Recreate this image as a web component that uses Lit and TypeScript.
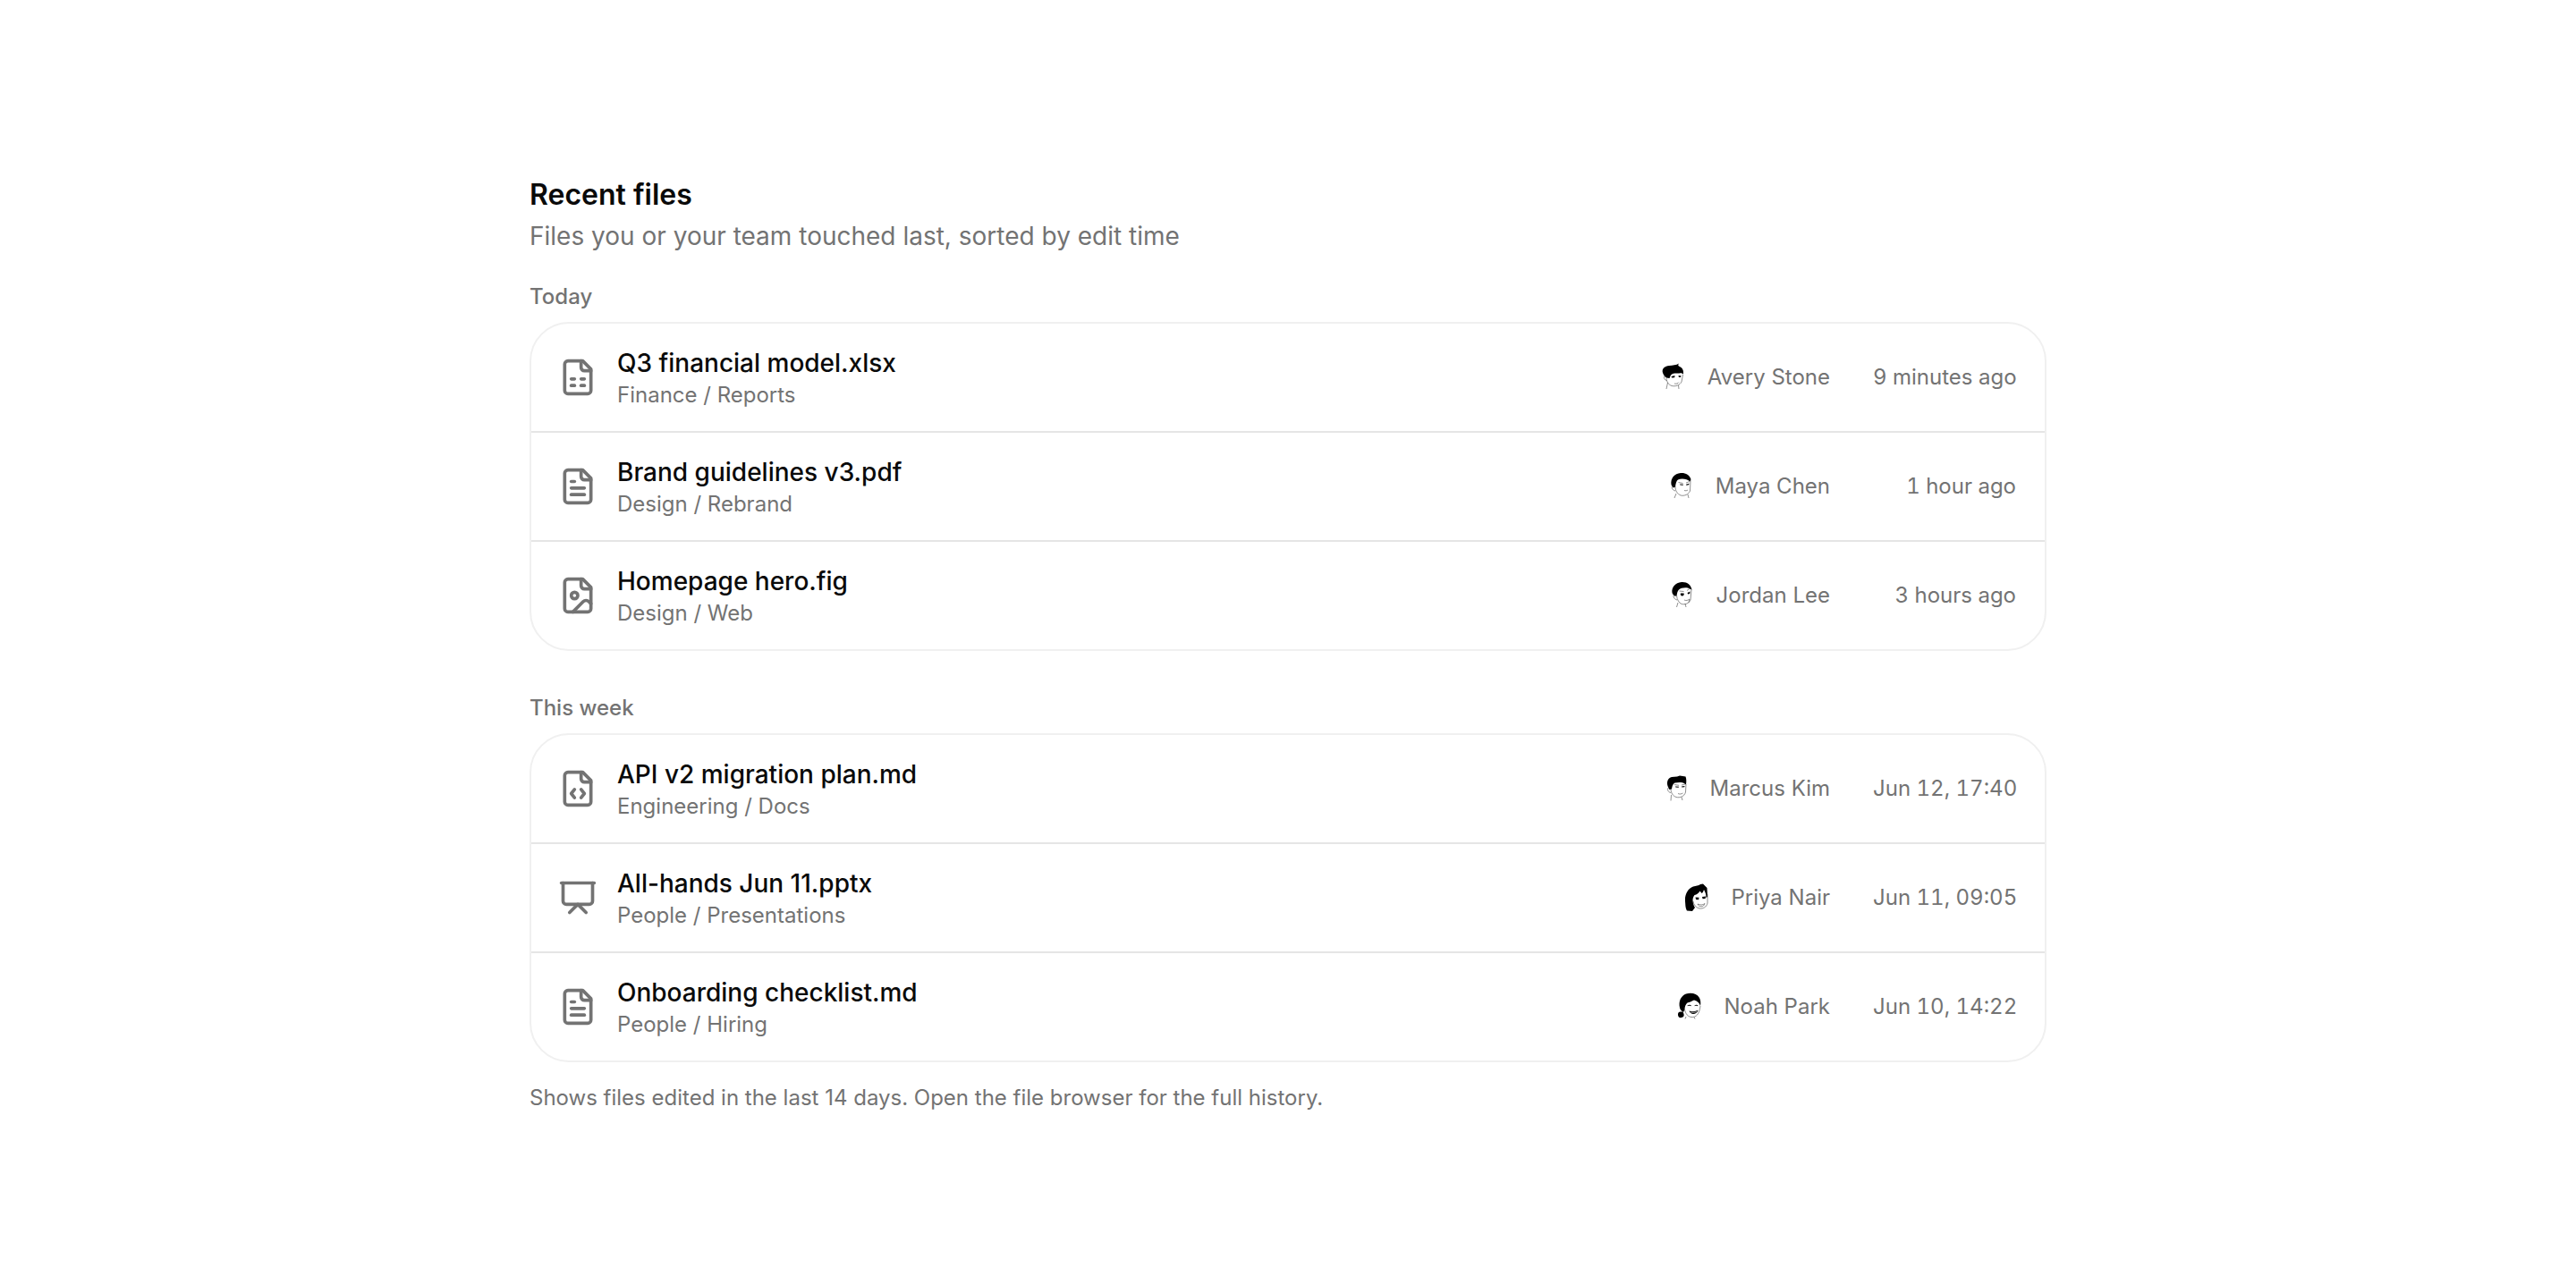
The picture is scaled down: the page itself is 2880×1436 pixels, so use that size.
import { LitElement, css, html, svg } from 'lit';
import { customElement } from 'lit/decorators.js';

type FileRow = {
  icon: keyof typeof ICONS,
  name: string,
  path: string,
  person: keyof typeof FACES,
  owner: string,
  time: string,
};

const FILE_BODY = svg`<path d="M15 2H6a2 2 0 0 0-2 2v16a2 2 0 0 0 2 2h12a2 2 0 0 0 2-2V7Z"/><path d="M14 2v4a2 2 0 0 0 2 2h4"/>`;

// lucide style, 24 grid
const ICONS = {
  sheet: svg`${FILE_BODY}<path d="M8 13h2"/><path d="M14 13h2"/><path d="M8 17h2"/><path d="M14 17h2"/>`,
  text: svg`${FILE_BODY}<path d="M10 9H8"/><path d="M16 13H8"/><path d="M16 17H8"/>`,
  image: svg`${FILE_BODY}<circle cx="10" cy="12" r="2"/><path d="m20 17-1.296-1.296a2.41 2.41 0 0 0-3.408 0L9 22"/>`,
  code: svg`${FILE_BODY}<path d="M10 12.5 8 15l2 2.5"/><path d="m14 12.5 2 2.5-2 2.5"/>`,
  slides: svg`<path d="M2 3h20"/><path d="M21 3v11a2 2 0 0 1-2 2H5a2 2 0 0 1-2-2V3"/><path d="m7 21 5-5 5 5"/>`,
};

// hand drawn faces: hair is the filled part, the rest is a thin outline
const FACES = {
  avery: svg`
    <path class="ink" d="M2 11C.5 6 4.500 3.500 9 3C13 2.500 17 2.500 20 .5C19 2 19 3 20 3.500C24 5 25.500 8 25 12.500L23.500 11.500C22.500 11 21.500 11 20.500 11.500C17 11.500 13 11 11 13.500L9.500 17L6 16.500C4 15.500 3 13.500 2 11Z"/>
    <path class="line" d="M6 17C6.500 21 8 24 12 25.500C16 26.500 21 25 23 21L24.500 13"/>
    <path class="line" d="M5 14C2.500 14.500 3 19 6.500 19.500M7.500 22L6 29M19.500 25L20 29"/>
    <path class="ink" d="M11.500 15l4-1-.3 2.300-3 .3ZM19.500 14l3 .2-.6 1.800-2-.3Z"/>
    <path class="line" d="M15 23C17 23.500 19 23 20 21.500"/>`,
  maya: svg`
    <path class="ink" d="M2.500 14C1.500 7 6 1.500 13 1C18 .5 23 3 24.500 8L23.500 10.500C20 7.500 14 6.500 10 8.500C8.500 9.500 7.500 12 7 16.500L5 17.500C4 16.500 3 15.500 2.500 14Z"/>
    <path class="line" d="M7 16C7 21 9 24 13 26C17 27 22 25 23.500 21L24 9"/>
    <path class="line" d="M5 15C2 16 3 20 7 21M8 24L6 29M21 25L22 29"/>
    <path class="ink" d="M12 13.500l4 .3-.4 1-3.100-.2ZM19 13.800l3.500-1-.4 1.500-2.700.4Z"/>
    <path class="line" d="M10.500 11.500l5 1M19 12l4-1.500M17 20.500c1.500.5 3 .3 4-.5"/>`,
  jordan: svg`
    <path class="ink" d="M2.500 13C1.500 7 6 1.500 13 1C19 .5 23.500 4 24.500 9.500L20 7.500C16 7 12 7.500 10 9.500C8.500 11 8 13 7.500 16.500L5 16.500C4 15.500 3 14.500 2.500 13Z"/>
    <path class="line" d="M7.500 16C8 21 10 24 13 25.500C17 26.500 21 25 23 21L24 9"/>
    <path class="line" d="M5 15C3 16 4 20 8 21M9 24L7.500 29M17 25L18 29"/>
    <path class="ink" d="M12 13.500a2 2 0 1 0 3.500 0ZM19.500 13l3-1.500-.3 2.500-2 .5Z"/>
    <path class="line" d="M10.500 11l5 .5M19 10.500l3.500-2.500M16 21c2 1 4 .5 6-1l-1 4"/>`,
  marcus: svg`
    <path class="ink" d="M4.500 13C3 8 5 4 9 3L15 2.500L18 1.500L24.500 2.500C25.500 5 25.500 8 25 11.500L23.500 10.500C21 8.500 16 9 12.500 9.500C10.500 10.500 9.500 13 9 16.500L6.500 17C5.500 15.500 5 14.500 4.500 13Z"/>
    <path class="line" d="M8 17C8.500 21 10 24 14 25.500C18 26.500 23 25 24.500 20L25 11"/>
    <path class="line" d="M6.500 14C3.500 15 4 20 8 20.500M8.500 23L8 29.500M20 25.500L21 29"/>
    <path class="ink" d="M13 13.500l4 .2-.3 1-3.300-.2ZM20 13.500l3.500-.5-.2 1.300-3 .2Z"/>
    <path class="line" d="M12 11.500l5 .8M20 12l4-1M16 21.500c1.500.8 4 .7 5.500-.5"/>`,
  priya: svg`
    <path class="ink" d="M1 20C.5 12 4 6 10 3.500C13 2.500 16 2.500 18 1L21 .5L25.500 5L26 15L24.500 16C24.500 12 23.500 9.500 22 7C21 10 20.500 10.500 19.500 11C18.500 9.500 18 9 17.500 8.500C16 11 14 12.500 11.500 13C10 15 9.500 17 9.500 19C10 23 10.500 25 12 27L9 31L3 30.500C1 27 1.500 24 1 20Z"/>
    <path class="line" d="M10 20C10.500 24 13 27 17 28C21 28.500 25 26.500 26 22L26 12"/>
    <path class="ink" d="M12.500 15.500l4 .3-.4 2.500-3 -.3ZM20 15l4-.5-.4 2.500-3 .3Z"/>
    <path class="line" d="M15 23c2.500 1.500 6 1.200 8-.5c-.5 2-2 3.300-4 3.300c-2 0-3.500-1-4-2.800Z"/>`,
  noah: svg`
    <path class="ink" d="M3 17C1.500 10 4 4 10 1.500C16 0 22 1 25 6C26.500 9 26.500 12 26 15C25 12 23 9.500 19 8.500C16 10 13.500 11 11.500 11.500C9.500 13 8.500 16 8.500 19L7 22L5 20.500C4 19.500 3.300 18.500 3 17Z"/>
    <path class="ink" d="M4 21.500a3.300 3.300 0 1 0 3.500 2.500L6.500 21.500Z"/>
    <path class="line" d="M8.500 19C9.500 24 12 27 16 27.500C21 28 25 24.500 26 15M10 27L9 29.500M19 27.500L20 29.500"/>
    <path class="ink" d="M11.500 14.500c1.500-1 3.500-1 4.500.2l-.8.500c-1.200-.5-2.200-.5-3.300 0ZM19.500 14.500c1.500-1 3-1 4 .2l-.7.500c-1-.5-2-.5-3 0Z"/>
    <path class="ink" d="M13.500 20.500c3 1 7 1 10-.7c-1 3-3 4.200-5.500 4.200c-2 0-3.700-1.300-4.500-3.500Z"/>
    <path class="teeth" d="M15 22c2 .6 5 .5 7-.5"/>`,
};

const TODAY: FileRow[] = [
  { icon: 'sheet', name: 'Q3 financial model.xlsx', path: 'Finance / Reports', person: 'avery', owner: 'Avery Stone', time: '9 minutes ago' },
  { icon: 'text', name: 'Brand guidelines v3.pdf', path: 'Design / Rebrand', person: 'maya', owner: 'Maya Chen', time: '1 hour ago' },
  { icon: 'image', name: 'Homepage hero.fig', path: 'Design / Web', person: 'jordan', owner: 'Jordan Lee', time: '3 hours ago' },
];

const THIS_WEEK: FileRow[] = [
  { icon: 'code', name: 'API v2 migration plan.md', path: 'Engineering / Docs', person: 'marcus', owner: 'Marcus Kim', time: 'Jun 12, 17:40' },
  { icon: 'slides', name: 'All-hands Jun 11.pptx', path: 'People / Presentations', person: 'priya', owner: 'Priya Nair', time: 'Jun 11, 09:05' },
  { icon: 'text', name: 'Onboarding checklist.md', path: 'People / Hiring', person: 'noah', owner: 'Noah Park', time: 'Jun 10, 14:22' },
];

@customElement('app-root')
export class AppRoot extends LitElement {
  private renderRow(row: FileRow) {
    return html`
      <li class="row">
        <svg class="icon" viewBox="0 0 24 24">${ICONS[row.icon]}</svg>
        <div class="info">
          <div class="name">${row.name}</div>
          <div class="path">${row.path}</div>
        </div>
        <div class="owner">
          <svg class="face" viewBox="0 0 30 30">${FACES[row.person]}</svg>
          <span>${row.owner}</span>
        </div>
        <div class="time">${row.time}</div>
      </li>
    `;
  }

  render() {
    return html`
      <main class="page">
        <h1>Recent files</h1>
        <p class="lead">Files you or your team touched last, sorted by edit time</p>
        <h2>Today</h2>
        <ul class="card">${TODAY.map(row => this.renderRow(row))}</ul>
        <h2 class="second">This week</h2>
        <ul class="card">${THIS_WEEK.map(row => this.renderRow(row))}</ul>
        <p class="foot">Shows files edited in the last 14 days. Open the file browser for the full history.</p>
      </main>
    `;
  }

  static styles = css`
    :host {
      display: block;
      min-height: 1436px;
      background: #fff;
      font-family: Inter, 'Noto Sans', sans-serif;
      color: #737373;
    }
    .page {
      width: 1696px;
      margin: 0 auto;
      padding-top: 199px;
    }
    h1 {
      margin: 0;
      font-size: 32px;
      line-height: 38px;
      font-weight: 600;
      color: #0a0a0a;
    }
    .lead {
      margin: 7px 0 0;
      font-size: 28px;
      line-height: 40px;
    }
    h2 {
      margin: 30px 0 0;
      font-size: 24px;
      line-height: 36px;
      font-weight: 500;
    }
    h2.second {
      margin-top: 46px;
    }
    .card {
      list-style: none;
      margin: 10px 0 0;
      padding: 0;
      border: 2px solid #f0f0f0;
      border-radius: 44px;
    }
    .row {
      display: flex;
      align-items: center;
      height: 120px;
      padding: 0 32px 0 30px;
      border-bottom: 2px solid #e5e5e5;
    }
    .row:last-child {
      border-bottom: 0;
    }
    .icon {
      width: 44px;
      height: 44px;
      flex: none;
      fill: none;
      stroke: #737373;
      stroke-width: 2;
      stroke-linecap: round;
      stroke-linejoin: round;
    }
    .info {
      flex: 1;
      margin-left: 22px;
      padding-top: 2px;
    }
    .name {
      font-size: 28px;
      line-height: 38px;
      font-weight: 500;
      color: #0a0a0a;
    }
    .path {
      font-size: 24px;
      line-height: 34px;
    }
    .owner {
      display: flex;
      align-items: center;
      gap: 22px;
      padding-bottom: 2px;
      font-size: 24px;
    }
    .face {
      width: 30px;
      height: 30px;
      overflow: visible;
      flex: none;
    }
    .ink {
      fill: #000;
    }
    .line {
      fill: none;
      stroke: #444;
      stroke-width: 0.6;
    }
    .teeth {
      fill: none;
      stroke: #fff;
      stroke-width: 0.6;
    }
    .time {
      width: 160px;
      margin-left: 48px;
      padding-bottom: 2px;
      text-align: right;
      white-space: nowrap;
      font-size: 24px;
      font-variant-numeric: tabular-nums;
    }
    .foot {
      margin: 22px 0 0;
      font-size: 24px;
      line-height: 36px;
    }
  `;
}

declare global {
  interface HTMLElementTagNameMap {
    'app-root': AppRoot
  }
}
